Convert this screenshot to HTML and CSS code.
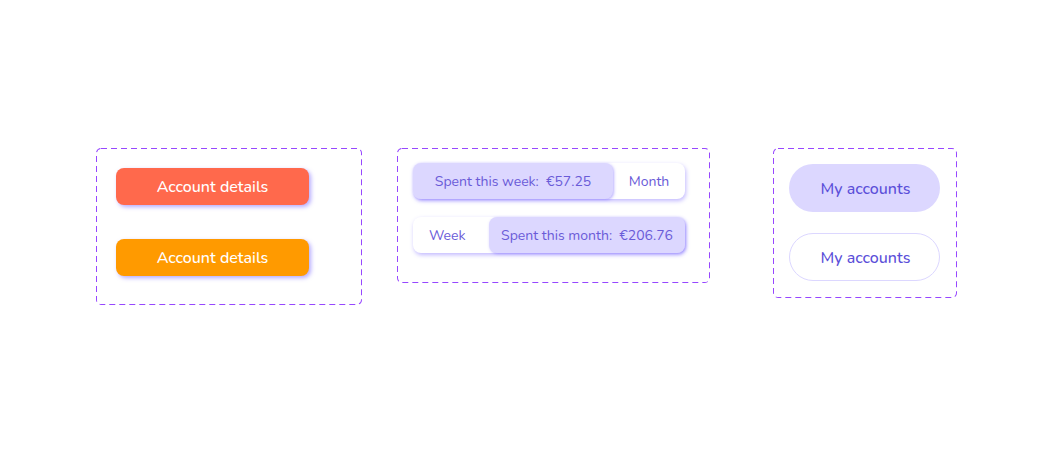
FILE: index.html
```html
<!DOCTYPE html>
<html>
<head>
<meta charset="utf-8">
<link rel="stylesheet" href="styles.css">
</head>
<body>
<div class="stage">
  <div class="frame frame-buttons">
    <button class="btn btn-red">Account details</button>
    <button class="btn btn-orange">Account details</button>
  </div>
  <div class="frame frame-toggles">
    <div class="toggle">
      <span class="seg seg-active seg-week">Spent this week:&nbsp; €57.25</span>
      <span class="seg seg-month-off">Month</span>
    </div>
    <div class="toggle">
      <span class="seg seg-week-off">Week</span>
      <span class="seg seg-active seg-month">Spent this month:&nbsp; €206.76</span>
    </div>
  </div>
  <div class="frame frame-pills">
    <button class="pill pill-filled">My accounts</button>
    <button class="pill pill-outline">My accounts</button>
  </div>
</div>
</body>
</html>
```
FILE: styles.css
```css
* { box-sizing: border-box; }
html, body { margin: 0; padding: 0; background: #ffffff; }
body { font-family: "Nunito", "Lato", "Open Sans", sans-serif; }
.stage {
  display: flex;
  align-items: flex-start;
  padding: 148px 0 0 96px;
}
.frame {
  border-radius: 5px;
  display: flex;
  flex-direction: column;
  background-image: url("data:image/svg+xml,%3Csvg xmlns='http://www.w3.org/2000/svg' width='100%25' height='100%25'%3E%3Crect x='0' y='0' width='100%25' height='100%25' rx='5' ry='5' fill='none' stroke='%239747FF' stroke-width='2' stroke-dasharray='6 4'/%3E%3C/svg%3E");
  background-repeat: no-repeat;
}
.frame-buttons {
  width: 266px;
  height: 157px;
  padding: 20px 0 0 20px;
  gap: 34px;
}
.frame-toggles {
  width: 313px;
  height: 135px;
  margin-left: 35px;
  padding: 15px 0 0 16px;
  gap: 18px;
}
.frame-pills {
  width: 184px;
  height: 150px;
  margin-left: 63px;
  padding: 16px 0 0 16px;
  gap: 21px;
}
.btn {
  width: 193px;
  height: 37px;
  border: none;
  border-radius: 8px;
  color: #ffffff;
  font-family: inherit;
  font-size: 16px;
  font-weight: 500;
  padding: 0;
  box-shadow: 2px 2px 4px rgba(120, 100, 255, 0.55);
}
.btn-red { background: #FF694C; }
.btn-orange { background: #FF9A00; }
.toggle {
  width: 272px;
  height: 36px;
  display: flex;
  background: #ffffff;
  border-radius: 8px;
  box-shadow: 1px 2px 4px rgba(120, 100, 255, 0.45);
}
.seg {
  display: flex;
  align-items: center;
  justify-content: center;
  font-size: 14px;
  color: #6A5BD8;
  height: 36px;
}
.seg-active {
  background: #DCD7FF;
  border-radius: 8px;
  box-shadow: 1px 1px 3px rgba(120, 100, 255, 0.5);
}
.seg-week { width: 200px; }
.seg-month-off { flex: 1; }
.seg-week-off { width: 76px; justify-content: flex-start; padding-left: 16px; }
.seg-month { flex: 1; }
.pill {
  width: 151px;
  height: 48px;
  border-radius: 24px;
  font-family: inherit;
  font-size: 16px;
  font-weight: 500;
  color: #5B4FD9;
  padding: 2px 0 0 2px;
}
.pill-filled { background: #DCD7FF; border: none; }
.pill-outline { background: #ffffff; border: 1px solid #DCD7FF; }
```
